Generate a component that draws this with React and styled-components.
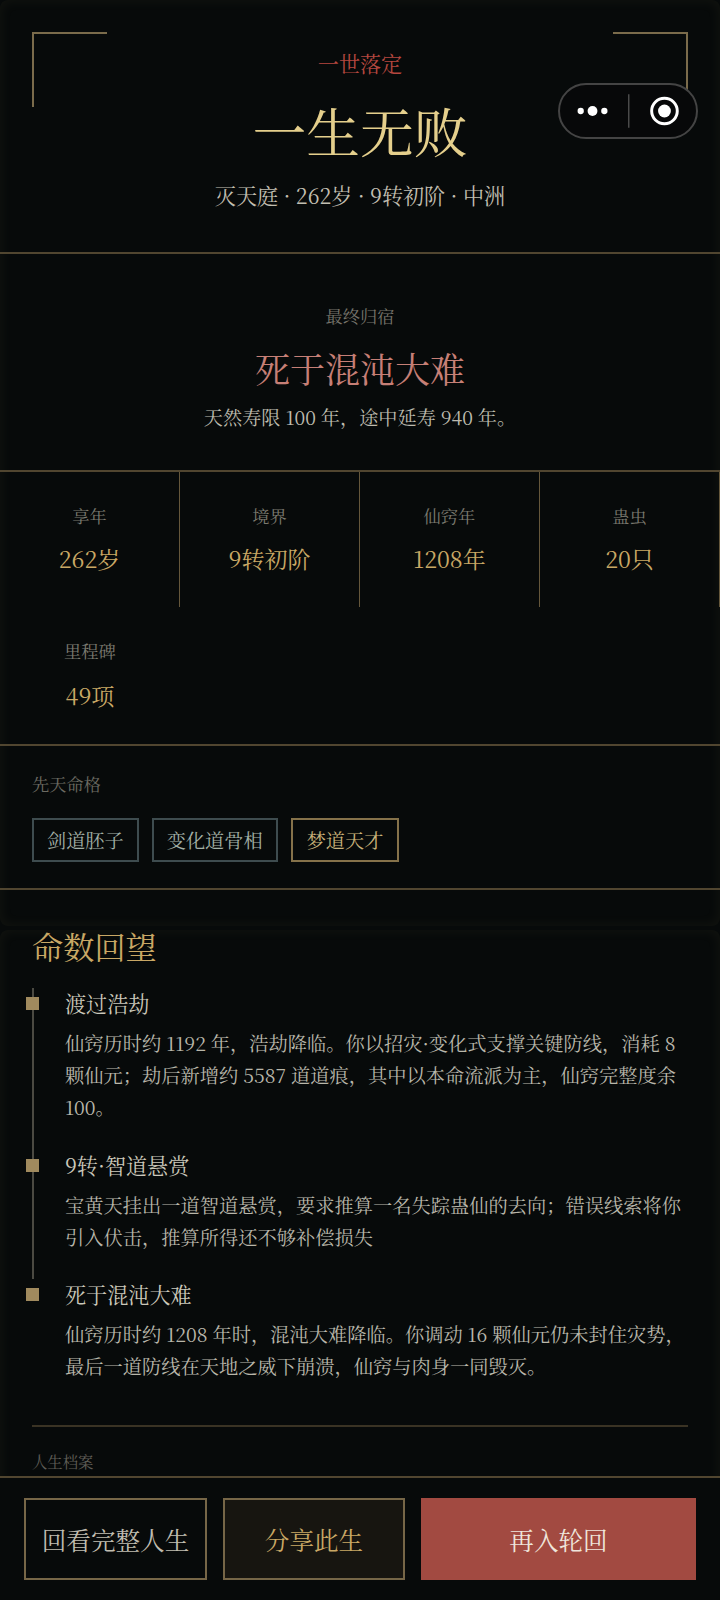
import React from "react";
import styled, { createGlobalStyle } from "styled-components";

const Global = createGlobalStyle`
  html, body { margin: 0; padding: 0; background: #070a0a; }
  * { box-sizing: border-box; }
  body { font-family: "Noto Serif CJK SC", "Liberation Serif", "Noto Sans CJK SC", serif; }
`;
const Page = styled.div`
  width: 720px; height: 1600px; overflow: hidden; position: relative; background: #070a0a;
  display: flex; flex-direction: column;
`;
const Frame = styled.i`
  position: absolute; left: 0; right: 0; top: ${p => p.$top}px; height: 926px; pointer-events: none; border-radius: 8px;
  box-shadow: inset 0 0 12px 2px rgba(190,165,100,0.06);
`;
const Scroll = styled.div`flex: 1; overflow: hidden; min-height: 0; position: relative;`;
const Hero = styled.header`
  height: 254px; border-bottom: 2px solid #514630; position: relative; text-align: center; padding-top: 49px;
`;
const Corner = styled.i`
  position: absolute; top: 32px; width: 75px; height: 75px; border-top: 2px solid #7a6b4b;
  ${p => p.$right ? "right: 32px; border-right: 2px solid #7a6b4b;" : "left: 32px; border-left: 2px solid #7a6b4b;"}
`;
const Kicker = styled.div`font-size: 21.12px; line-height: 28px; color: #b5473f;`;
const Title = styled.h1`margin: 18px 0 0; font-size: 53.76px; line-height: 70px; font-weight: 400; color: #e4cf8c;`;
const Sub = styled.div`margin-top: 15px; font-size: 21.12px; line-height: 30px; color: #c2bfb1;`;
const Capsule = styled.div`
  position: absolute; left: 558px; top: 83px; width: 140px; height: 56px; border: 2px solid #444; border-radius: 28px;
  background: #070809; display: flex; align-items: center;
`;
const Fate = styled.section`height: 218px; border-bottom: 2px solid #514630; text-align: center; padding-top: 49px;`;
const FateLabel = styled.div`font-size: 17.28px; line-height: 26px; color: #77756c;`;
const FateName = styled.div`margin-top: 14px; font-size: 35px; line-height: 50px; color: #c67f76;`;
const FateText = styled.div`margin-top: 9px; font-size: 19.2px; line-height: 30px; color: #bdbbae;`;
const Stats = styled.section`display: grid; grid-template-columns: repeat(4, 180px); border-bottom: 2px solid #514630; height: 274px; align-content: start;`;
const Stat = styled.div`height: ${p => p.$plain ? 137 : 135}px; border-right: ${p => p.$plain ? "none" : "1px solid #65573b"}; text-align: center; padding-top: 31px;`;
const StatLabel = styled.div`font-size: 17.28px; line-height: 26px; color: #7c7a70;`;
const StatValue = styled.div`margin-top: ${p => p.$low ? 14 : 12}px; font-size: 23.04px; line-height: 34px; color: #c9a865;`;
const Talents = styled.section`height: 144px; border-bottom: 2px solid #514630; padding: 25px 32px 0;`;
const Chips = styled.div`display: flex; gap: 13px; margin-top: 21px;`;
const Chip = styled.span`
  height: 44px; padding: 0 ${p => p.$gold ? 14 : 13}px; border: 2px solid ${p => p.$gold ? "#85724a" : "#3e4c4f"}; color: ${p => p.$gold ? "#c9b27a" : "#a3b0a6"};
  font-size: 19.2px; line-height: 40px;
`;
const Muted = styled.div`font-size: 17.28px; line-height: 26px; color: #6c6a62;`;
const Fortune = styled.section`padding: 33px 32px 0 32px;`;
const Heading = styled.h2`margin: 0; font-size: 31.2px; line-height: 46px; font-weight: 400; color: #c9a865;`;
const Timeline = styled.div`margin-top: 19px; display: flex; flex-direction: column;`;
const Entry = styled.article`
  position: relative; padding-left: 31px; height: ${p => p.$h}px;
  border-left: 2px solid ${p => p.$last ? "transparent" : "#4b4a42"};
`;
const Dot = styled.i`position: absolute; left: -8px; top: 9px; width: 13px; height: 13px; background: #a08a5e;`;
const EntryTitle = styled.div`font-size: 21.12px; line-height: 30px; color: #cbc8ba;`;
const EntryText = styled.p`margin: 9px 0 0; font-size: 19.25px; line-height: 32px; color: #b9b7aa;`;
const Rule = styled.hr`margin: 42px 32px 0; border: 0; border-top: 2px solid #3a3324;`;
const Archive = styled.div`padding: 22px 32px 0; font-size: 15.36px; line-height: 24px; color: #5f5d56;`;
const Footer = styled.footer`
  height: 124px; border-top: 2px solid #514630; background: #070a0a; padding: 20px 24px 0; display: flex; gap: 16px; align-items: flex-start; position: relative;
`;
const Button = styled.button`
  font: inherit; height: 82px; font-size: 24.6px; border: ${p => p.$primary ? "0" : "2px solid #766647"}; width: ${p => p.$w}px; flex: none;
  background: ${p => p.$primary ? "#a24a41" : p.$gold ? "#171510" : "#070a0a"};
  color: ${p => p.$primary ? "#efe6dc" : p.$gold ? "#c9a865" : "#c0bdb0"};
`;

const stats = [["享年","262岁"],["境界","9转初阶"],["仙窍年","1208年"],["蛊虫","20只"]];

export default function App() {
  return (
    <Page>
      <Global />
      <Frame $top={0} /><Frame $top={930} />
      <Scroll>
        <Hero>
          <Corner /><Corner $right />
          <Kicker>一世落定</Kicker>
          <Title>一生无败</Title>
          <Sub>灭天庭 · 262岁 · 9转初阶 · 中洲</Sub>
        </Hero>
        <Fate>
          <FateLabel>最终归宿</FateLabel>
          <FateName>死于混沌大难</FateName>
          <FateText>天然寿限 100 年，途中延寿 940 年。</FateText>
        </Fate>
        <Stats>
          {stats.map(([a,b]) => <Stat key={a}><StatLabel>{a}</StatLabel><StatValue>{b}</StatValue></Stat>)}
          <Stat $plain><StatLabel>里程碑</StatLabel><StatValue $low>49项</StatValue></Stat>
        </Stats>
        <Talents>
          <Muted>先天命格</Muted>
          <Chips><Chip>剑道胚子</Chip><Chip>变化道骨相</Chip><Chip $gold>梦道天才</Chip></Chips>
        </Talents>
        <Fortune>
          <Heading>命数回望</Heading>
          <Timeline>
            <Entry $h={162}><Dot /><EntryTitle>渡过浩劫</EntryTitle><EntryText>仙窍历时约 1192 年，浩劫降临。你以招灾·变化式支撑关键防线，消耗 8 颗仙元；劫后新增约 5587 道道痕，其中以本命流派为主，仙窍完整度余 100。</EntryText></Entry>
            <Entry $h={129}><Dot /><EntryTitle>9转·智道悬赏</EntryTitle><EntryText>宝黄天挂出一道智道悬赏，要求推算一名失踪蛊仙的去向；错误线索将你引入伏击，推算所得还不够补偿损失</EntryText></Entry>
            <Entry $h={104} $last><Dot /><EntryTitle>死于混沌大难</EntryTitle><EntryText>仙窍历时约 1208 年时，混沌大难降临。你调动 16 颗仙元仍未封住灾势，最后一道防线在天地之威下崩溃，仙窍与肉身一同毁灭。</EntryText></Entry>
          </Timeline>
        </Fortune>
        <Rule />
        <Archive>人生档案</Archive>
      </Scroll>
      <Footer>
        <Button $w={183}>回看完整人生</Button>
        <Button $w={182} $gold>分享此生</Button>
        <Button $w={275} $primary>再入轮回</Button>
      </Footer>
      <Capsule>
        <svg width="138" height="52" viewBox="0 0 138 52">
          <circle cx="21" cy="26" r="3.2" fill="#fff" /><circle cx="33" cy="26" r="5" fill="#fff" /><circle cx="45" cy="26" r="3.2" fill="#fff" />
          <rect x="69" y="9" width="1.5" height="34" fill="#4a4a4a" />
          <circle cx="106" cy="26" r="13" fill="none" stroke="#fff" strokeWidth="3" /><circle cx="106" cy="26" r="6.5" fill="#fff" />
        </svg>
      </Capsule>
    </Page>
  );
}
